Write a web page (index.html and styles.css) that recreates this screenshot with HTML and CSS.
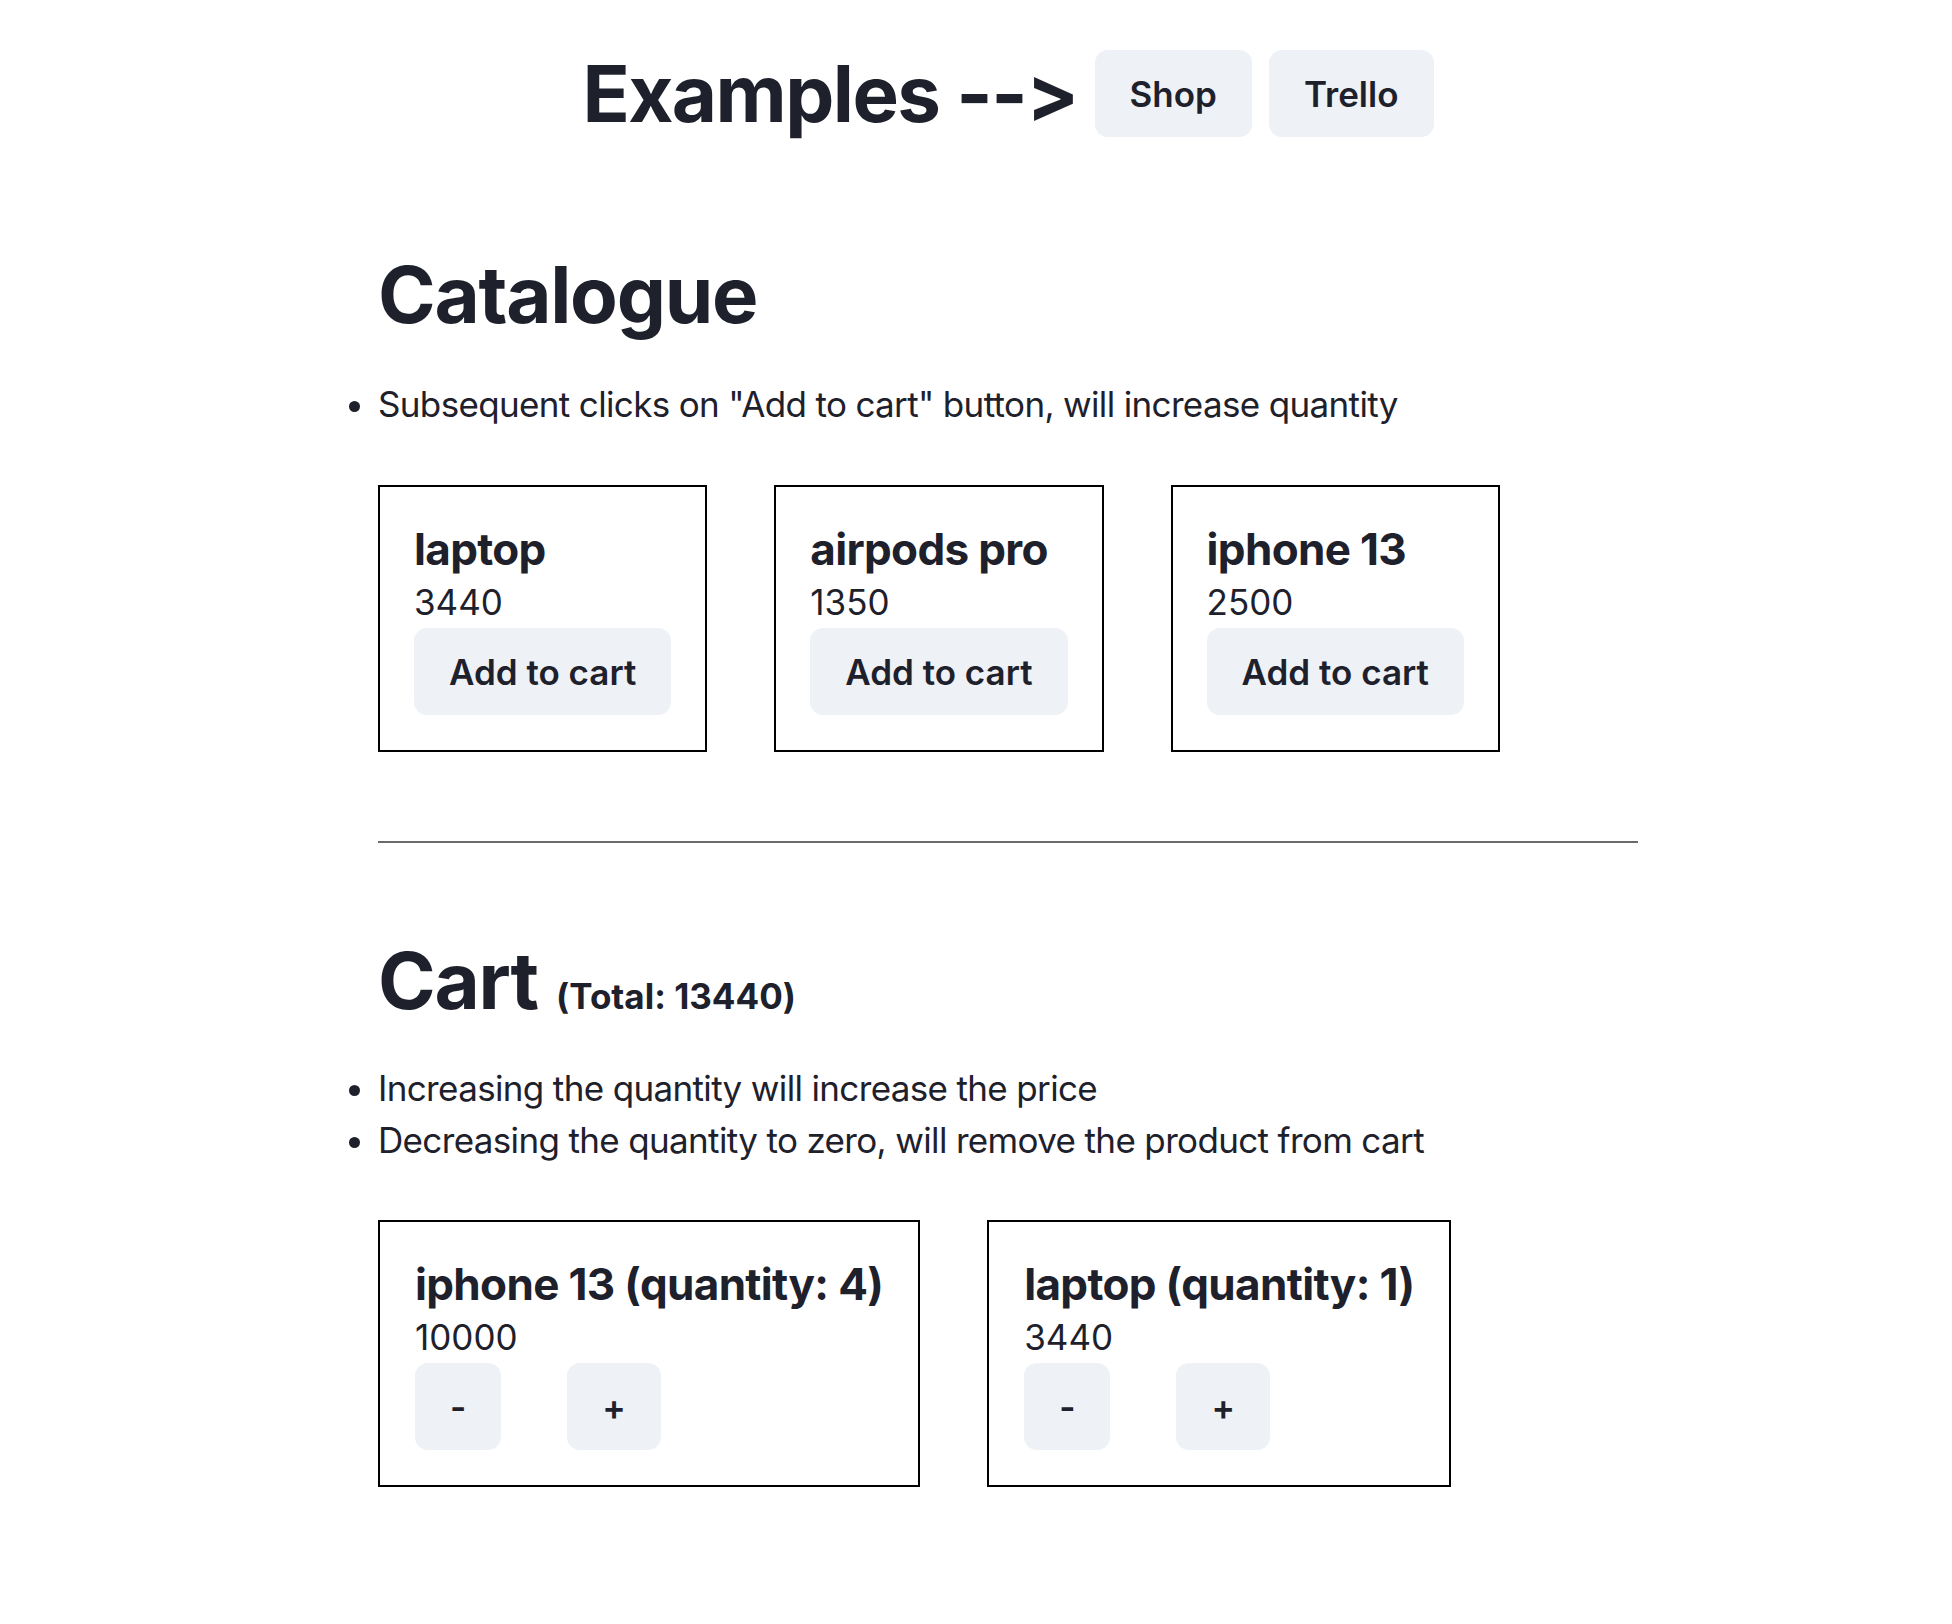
FILE: index.html
```html
<!DOCTYPE html>
<html lang="en">
<head>
    <meta charset="UTF-8">
    <meta name="viewport" content="width=device-width, initial-scale=1.0">
    <title>Examples - Shop</title>
    <link rel="stylesheet" href="styles.css">
</head>
<body>
    <div class="page">
        <!-- Шапка с переключением примеров -->
        <header class="top">
            <h1 class="top-title">Examples --&gt;</h1>
            <a href="#" class="btn">Shop</a>
            <a href="#" class="btn">Trello</a>
        </header>

        <!-- Каталог -->
        <section class="catalogue">
            <h2 class="section-title">Catalogue</h2>
            <ul class="notes">
                <li>Subsequent clicks on "Add to cart" button, will increase quantity</li>
            </ul>
            <div class="cards">
                <div class="card">
                    <div class="card-title">laptop</div>
                    <div class="card-price">3440</div>
                    <button class="btn">Add to cart</button>
                </div>
                <div class="card">
                    <div class="card-title">airpods pro</div>
                    <div class="card-price">1350</div>
                    <button class="btn">Add to cart</button>
                </div>
                <div class="card">
                    <div class="card-title">iphone 13</div>
                    <div class="card-price">2500</div>
                    <button class="btn">Add to cart</button>
                </div>
            </div>
        </section>

        <hr class="divider">

        <!-- Корзина -->
        <section class="cart">
            <h2 class="section-title">Cart <span class="cart-total">(Total: 13440)</span></h2>
            <ul class="notes">
                <li>Increasing the quantity will increase the price</li>
                <li>Decreasing the quantity to zero, will remove the product from cart</li>
            </ul>
            <div class="cards">
                <div class="card">
                    <div class="card-title">iphone 13 (quantity: 4)</div>
                    <div class="card-price">10000</div>
                    <div class="qty">
                        <button class="btn">-</button>
                        <button class="btn">+</button>
                    </div>
                </div>
                <div class="card">
                    <div class="card-title">laptop (quantity: 1)</div>
                    <div class="card-price">3440</div>
                    <div class="qty">
                        <button class="btn">-</button>
                        <button class="btn">+</button>
                    </div>
                </div>
            </div>
        </section>
    </div>
</body>
</html>
```

FILE: styles.css
```css
* {
    margin: 0;
    padding: 0;
    box-sizing: border-box;
    font-family: Inter, "Noto Sans", sans-serif;
    font-feature-settings: "calt" 0, "liga" 0;
}

body {
    background: #fff;
    color: #1e212b;
}

.page {
    width: 1260px;
    margin-left: 378px;
    padding-top: 50px;
    padding-bottom: 120px;
}

/* Шапка */
.top {
    display: flex;
    justify-content: center;
    align-items: center;
    gap: 17px;
}

.top-title {
    font-size: 78px;
    line-height: 87px;
    font-weight: 700;
    letter-spacing: -0.02em;
}

/* Кнопки */
.btn {
    display: inline-block;
    background: #eef1f5;
    color: #1e212b;
    border: none;
    border-radius: 13px;
    padding: 18px 35px 17px;
    font-size: 35px;
    line-height: 52px;
    font-weight: 600;
    text-decoration: none;
    cursor: pointer;
}

.btn:hover {
    background: #e2e7ee;
}

/* Секции */
.section-title {
    font-size: 78px;
    line-height: 87px;
    font-weight: 700;
    letter-spacing: -0.016em;
}

.catalogue .section-title {
    margin-top: 114px;
}

.cart .section-title {
    margin-top: 94px;
}

.cart-total {
    font-size: 35px;
    line-height: 1;
    font-weight: 700;
    letter-spacing: 0;
    margin-left: 1px;
}

.notes {
    margin-top: 40px;
    font-size: 35px;
    line-height: 52px;
    letter-spacing: -0.65px;
    list-style: disc outside;
}

.cart .notes {
    margin-top: 38px;
}

.cards {
    display: flex;
    align-items: flex-start;
    gap: 67px;
    margin-top: 55px;
}

.cart .cards {
    margin-top: 54px;
}

.card {
    border: 2px solid #000;
    padding: 35px;
}

.catalogue .card {
    padding: 35px 34px;
}

.card-title {
    font-size: 44px;
    line-height: 54px;
    font-weight: 700;
    letter-spacing: -0.015em;
}

.card-price {
    font-size: 35px;
    line-height: 52px;
}

.qty {
    display: flex;
    gap: 66px;
}

.divider {
    margin-top: 89px;
    border: none;
    border-top: 2px solid #6b6b6b;
}
```
